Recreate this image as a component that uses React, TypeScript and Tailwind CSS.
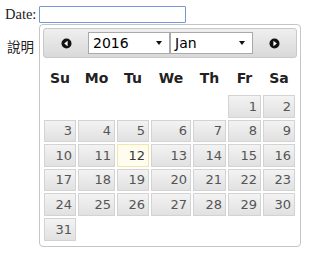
const cols = ["w-[32px]", "w-[37px]", "w-[32px]", "w-[40px]", "w-[33px]", "w-[33px]", "w-[32px]"];
const weekdays = ["Su", "Mo", "Tu", "We", "Th", "Fr", "Sa"];

function CircleArrow({ dir }: { dir: "left" | "right" }) {
  return (
    <svg width="11" height="11" viewBox="0 0 11 11">
      <circle cx="5.5" cy="5.5" r="5" fill="#111" />
      {dir === "left" ? (
        <path d="M3.2 5.5 L6.6 2.8 L6.6 8.2 Z" fill="#fff" />
      ) : (
        <path d="M7.8 5.5 L4.4 2.8 L4.4 8.2 Z" fill="#fff" />
      )}
    </svg>
  );
}

function FakeSelect({ value, width }: { value: string; width: string }) {
  return (
    <div className={`${width} h-[22px] bg-white border border-[#a9a9a9] flex items-center justify-between pl-[4px] pr-[7px] text-[14px] text-black`}>
      <span>{value}</span>
      <svg width="6" height="4" viewBox="0 0 6 4">
        <path d="M0 0 H6 L3 4 Z" fill="#111" />
      </svg>
    </div>
  );
}

export default function App() {
  // Jan 2016 starts on a Friday
  const cells: (number | null)[] = [null, null, null, null, null];
  for (let d = 1; d <= 31; d++) cells.push(d);

  return (
    <div className="relative w-[320px] h-[270px] bg-white text-[#222] font-['Liberation_Serif',serif]">
      <div className="flex items-center pl-[5px] pt-[6px] gap-[3px]">
        <span className="text-[14.5px] leading-[17px]">Date:</span>
        <input className="w-[147px] h-[17px] border border-[#7796d4] rounded-[1px] outline-none" />
      </div>
      <div className="pl-[7px] mt-[15px] text-[13.5px] leading-[16px] font-['Noto_Sans_CJK_TC',sans-serif]">
        說明
      </div>

      {/* datepicker popup */}
      <div className="absolute left-[39px] top-[24px] w-[262px] h-[223px] bg-white border border-[#c5c5c5] rounded-[4px] p-[3px] font-['DejaVu_Sans',sans-serif]">
        <div className="h-[30px] rounded-[3px] border border-[#c8c8c8] bg-linear-to-b from-[#efefef] to-[#d9d9d9] flex items-center">
          <div className="w-[44px] flex justify-center pl-[1px]">
            <CircleArrow dir="left" />
          </div>
          <FakeSelect value="2016" width="w-[82px]" />
          <FakeSelect value="Jan" width="w-[83px]" />
          <div className="flex-1 flex justify-center">
            <CircleArrow dir="right" />
          </div>
        </div>

        <div className="px-[1px]">
          <div className="flex gap-[2px] h-[37px] pt-[3px] items-center">
            {weekdays.map((w, i) => (
              <div key={w} className={`${cols[i]} text-center font-bold text-[14px] text-[#222]`}>
                {w}
              </div>
            ))}
          </div>

          <div className="grid grid-cols-[32px_37px_32px_40px_33px_33px_32px] auto-rows-[22.6px] gap-x-[2px] gap-y-[2px]">
            {cells.map((d, i) =>
              d === null ? (
                <div key={i} />
              ) : (
                <div
                  key={i}
                  className={
                    d === 12
                      ? "border border-[#f1e6a6] bg-[#fdfcef] text-[#363636] text-right pr-[3px] text-[13px] flex items-center justify-end"
                      : "border border-[#d3d3d3] bg-linear-to-b from-[#f3f3f3] to-[#e1e1e1] text-[#555] text-right pr-[3px] text-[13px] flex items-center justify-end"
                  }
                >
                  {d}
                </div>
              )
            )}
          </div>
        </div>
      </div>
    </div>
  );
}
